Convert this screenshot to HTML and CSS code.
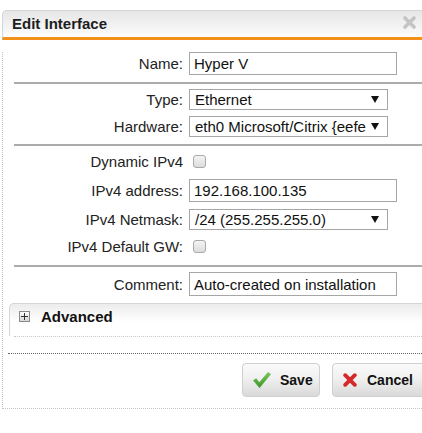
FILE: index.html
```html
<!DOCTYPE html>
<html>
<head>
<meta charset="utf-8">
<link rel="stylesheet" href="styles.css">
</head>
<body>
<div class="dialog">
  <div class="titlebar">
    <span class="title">Edit Interface</span>
    <svg class="close" width="13" height="13" viewBox="0 0 13 13"><path d="M2 2 L11 11 M11 2 L2 11" stroke="#c4c4c4" stroke-width="3.6" stroke-linecap="round"/></svg>
  </div>
  <div class="content">
    <div class="row r-name">
      <span class="lbl">Name:</span>
      <div class="input">Hyper V</div>
    </div>
    <div class="sep s1"></div>
    <div class="row r-type">
      <span class="lbl">Type:</span>
      <div class="select"><span class="val">Ethernet</span><svg class="arrow" width="8" height="7" viewBox="0 0 8 7"><polygon points="0,0 8,0 4,7" fill="#111"/></svg></div>
    </div>
    <div class="row r-hw">
      <span class="lbl">Hardware:</span>
      <div class="select"><span class="val">eth0 Microsoft/Citrix {eefe</span><svg class="arrow" width="8" height="7" viewBox="0 0 8 7"><polygon points="0,0 8,0 4,7" fill="#111"/></svg></div>
    </div>
    <div class="sep s2"></div>
    <div class="row r-dyn">
      <span class="lbl">Dynamic IPv4</span>
      <span class="check"></span>
    </div>
    <div class="row r-addr">
      <span class="lbl">IPv4 address:</span>
      <div class="input">192.168.100.135</div>
    </div>
    <div class="row r-mask">
      <span class="lbl">IPv4 Netmask:</span>
      <div class="select"><span class="val">/24 (255.255.255.0)</span><svg class="arrow" width="8" height="7" viewBox="0 0 8 7"><polygon points="0,0 8,0 4,7" fill="#111"/></svg></div>
    </div>
    <div class="row r-gw">
      <span class="lbl">IPv4 Default GW:</span>
      <span class="check"></span>
    </div>
    <div class="sep s3"></div>
    <div class="row r-comment">
      <span class="lbl">Comment:</span>
      <div class="input">Auto-created on installation</div>
    </div>
    <div class="panel">
      <div class="panel-head">
        <span class="plus"></span>
        <span class="panel-title">Advanced</span>
      </div>
    </div>
    <div class="dots-light"></div>
    <div class="dots-dark"></div>
    <div class="buttons">
      <div class="btn btn-save">
        <svg class="ico" width="18" height="16" viewBox="0 0 18 16">
          <defs><linearGradient id="g" x1="0" y1="0" x2="0" y2="1"><stop offset="0" stop-color="#7cc95a"/><stop offset="1" stop-color="#3f942c"/></linearGradient></defs>
          <polygon points="0,8.5 3.2,6.2 6.3,10.2 15,0 18,2.2 6.6,16" fill="url(#g)"/>
        </svg>
        <span>Save</span>
      </div>
      <div class="btn btn-cancel">
        <svg class="ico" width="14" height="14" viewBox="0 0 14 14"><path d="M2.2 2.2 L11.8 11.8 M11.8 2.2 L2.2 11.8" stroke="#d6282b" stroke-width="3.8" stroke-linecap="round"/></svg>
        <span>Cancel</span>
      </div>
    </div>
  </div>
</div>
</body>
</html>
```
FILE: styles.css
```css
html, body {
  margin: 0;
  padding: 0;
}
body {
  width: 422px;
  height: 433px;
  overflow: hidden;
  background: #fff;
  font-family: "Liberation Sans", Arial, sans-serif;
  color: #222;
}
.dialog {
  margin: 10px 0 0 2px;
  width: 440px;
}
.titlebar {
  height: 30px;
  box-sizing: border-box;
  border-top: 1px solid #d4d4d4;
  border-left: 1px solid #d4d4d4;
  border-bottom: 3px solid #f39019;
  border-radius: 5px 0 0 0;
  background: linear-gradient(#e6e6e6, #fcfcfc);
  display: flex;
  align-items: center;
  padding: 0 26px 2px 9px;
}
.title {
  font-weight: bold;
  font-size: 15px;
  color: #1e1e1e;
}
.close {
  margin-left: auto;
  margin-top: -1px;
}
.content {
  border-left: 1px dotted #c4c4c4;
  border-bottom: 1px dotted #c4c4c4;
  padding-bottom: 11px;
}
.row {
  display: flex;
  align-items: center;
}
.lbl {
  flex: none;
  width: 180px;
  margin-right: 6px;
  text-align: right;
  font-size: 15px;
  color: #222;
  white-space: nowrap;
}
.input {
  width: 208px;
  height: 23px;
  box-sizing: border-box;
  border: 1px solid #a6a6a6;
  padding-left: 4px;
  font-size: 15px;
  color: #111;
  display: flex;
  align-items: center;
  white-space: nowrap;
}
.select {
  width: 199px;
  height: 21px;
  box-sizing: border-box;
  border: 1px solid #a6a6a6;
  padding: 0 8px 0 5px;
  font-size: 15px;
  color: #111;
  display: flex;
  align-items: center;
}
.select .val {
  flex: 1;
  white-space: nowrap;
}
.arrow {
  flex: none;
  margin-left: 4px;
}
.check {
  width: 13px;
  height: 13px;
  box-sizing: border-box;
  margin-left: 4px;
  border: 1px solid #a9a9a9;
  border-radius: 3px;
  background: linear-gradient(#f4f4f4, #dcdcdc);
}
.sep {
  height: 2px;
  background: #ababab;
  margin-left: 11px;
}
.r-name { margin-top: 12px; }
.s1 { margin-top: 7px; }
.r-type { margin-top: 5px; }
.r-hw { margin-top: 6px; }
.s2 { margin-top: 7px; }
.r-dyn { margin-top: 7px; height: 16px; }
.r-addr { margin-top: 10px; }
.r-mask { margin-top: 7px; }
.r-gw { margin-top: 8px; height: 16px; }
.s3 { margin-top: 11px; }
.r-comment { margin-top: 5px; }
.r-comment .input { height: 24px; }
.panel {
  margin-top: 7px;
  margin-left: 6px;
  height: 33px;
  box-sizing: border-box;
  border-top: 1px solid #d6d6d6;
  border-left: 1px solid #d6d6d6;
  border-radius: 5px 0 0 0;
  background: linear-gradient(#ececec, #ffffff 18px);
}
.panel-head {
  height: 25px;
  display: flex;
  align-items: center;
  padding-left: 9px;
}
.plus {
  width: 11px;
  height: 11px;
  box-sizing: border-box;
  border: 1px solid #8a8a8a;
  background:
    linear-gradient(#333, #333) center / 7px 1px no-repeat,
    linear-gradient(#333, #333) center / 1px 7px no-repeat,
    linear-gradient(#fdfdfd, #d6d6d6);
}
.panel-title {
  margin-left: 11px;
  font-weight: bold;
  font-size: 15px;
  color: #111;
}
.dots-light {
  margin-left: 11px;
  border-top: 1px dotted #c8c8c8;
}
.dots-dark {
  margin-top: 16px;
  margin-left: 5px;
  border-top: 1px dotted #666;
}
.buttons {
  display: flex;
  gap: 12px;
  margin-top: 9px;
  padding-left: 239px;
}
.btn {
  height: 34px;
  box-sizing: border-box;
  border: 1px solid #cfcfcf;
  border-radius: 4px;
  background: linear-gradient(#fafafa, #f0f0f0 45%, #d9d9d9);
  display: flex;
  align-items: center;
  padding-left: 10px;
  font-weight: bold;
  font-size: 14px;
  color: #111;
}
.btn-save {
  width: 78px;
}
.btn-save span { margin-left: 9px; }
.btn-cancel {
  width: 100px;
}
.btn-cancel span { margin-left: 10px; }
```
